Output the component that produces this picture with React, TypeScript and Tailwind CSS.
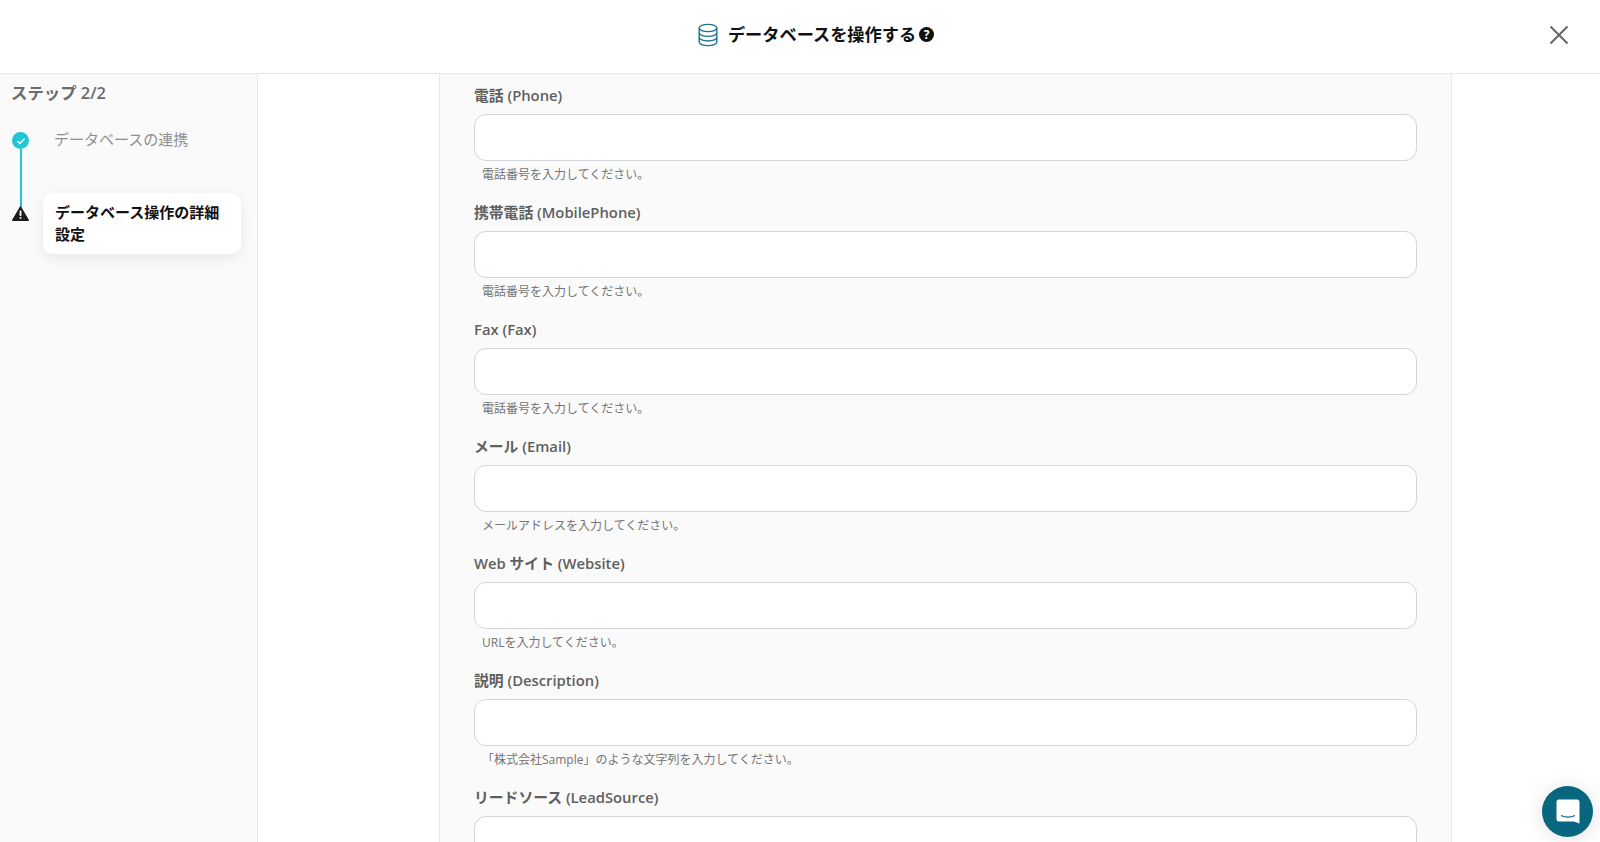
const font = { fontFamily: '"Open Sans", "Noto Sans CJK JP", sans-serif' };

const fields = [
  ['電話 (Phone)', '電話番号を入力してください。'],
  ['携帯電話 (MobilePhone)', '電話番号を入力してください。'],
  ['Fax (Fax)', '電話番号を入力してください。'],
  ['メール (Email)', 'メールアドレスを入力してください。'],
  ['Web サイト (Website)', 'URLを入力してください。'],
  ['説明 (Description)', '「株式会社Sample」のような文字列を入力してください。'],
  ['リードソース (LeadSource)', ''],
];

function Field({ label, help }: { label: string; help: string }) {
  return (
    <div className="h-[117px] shrink-0">
      <div className="h-[24px] mt-[1px] text-[14.8px] leading-[24px] font-semibold text-[#5f5f5f]">{label}</div>
      <input className="block w-full h-[47px] mt-[7px] rounded-[12px] border border-[#d3d5da] bg-white" />
      {help && <div className="mt-[5px] pl-[8px] text-[12px] leading-[18px] text-[#757575]">{help}</div>}
    </div>
  );
}

export default function App() {
  return (
    <div className="w-[1600px] h-[842px] overflow-hidden bg-white flex flex-col relative" style={font}>
      <header className="h-[74px] shrink-0 border-b border-[#e6e6e6] flex items-center justify-center relative">
        <div className="flex items-center mt-[-4px] ml-[32px]">
          <svg className="mt-[1px]" width="20" height="24" viewBox="0 0 20 24" fill="none" stroke="#1b7390" strokeWidth="1.4">
            <ellipse cx="10" cy="5" rx="8.8" ry="3.6" />
            <path d="M1.2 5v14c0 2 3.9 3.6 8.8 3.6s8.8-1.6 8.8-3.6V5" />
            <path d="M1.2 9.8c0 2 3.9 3.6 8.8 3.6s8.8-1.6 8.8-3.6" />
            <path d="M1.2 14.4c0 2 3.9 3.6 8.8 3.6s8.8-1.6 8.8-3.6" />
          </svg>
          <span className="ml-[10px] text-[17.2px] font-semibold text-[#111]">データベースを操作する</span>
          <span className="ml-[3px] w-[15px] h-[15px] rounded-full bg-[#111] text-white text-[12px] leading-[15px] font-bold text-center">?</span>
        </div>
        <svg className="absolute left-[1549px] top-[25px]" width="20" height="20" viewBox="0 0 20 20" stroke="#666" strokeWidth="2" fill="none">
          <path d="M1.5 1.5l17 17M18.5 1.5l-17 17" />
        </svg>
      </header>
      <div className="flex flex-1 min-h-0">
        <aside className="w-[258px] shrink-0 border-r border-[#e8e8e8] bg-[#fafafa] pt-[7px]">
          <div className="pl-[11px] h-[24px] text-[16.4px] leading-[24px] font-semibold text-[#6b6b6b]">ステップ 2/2</div>
          <div className="relative mt-[23px] h-[140px]">
            <div className="absolute left-[12px] top-[4px] w-[17px] h-[17px] rounded-full bg-[#20c6d8] flex items-center justify-center">
              <svg width="10" height="10" viewBox="0 0 10 10" fill="none" stroke="#fff" strokeWidth="1.4"><path d="M1.5 5.2l2.4 2.3 4.6-4.8" /></svg>
            </div>
            <div className="absolute left-[20px] top-[21px] w-[1.5px] h-[58px] bg-[#20c6d8]" />
            <svg className="absolute left-[12px] top-[78px]" width="17" height="15" viewBox="0 0 17 15">
              <path d="M8.5 0.5L16.7 14.5H0.3Z" fill="#1c1c1c" stroke="#1c1c1c" strokeLinejoin="round" />
              <rect x="7.6" y="4.5" width="1.8" height="5.5" rx=".5" fill="#fff" />
              <rect x="7.6" y="11" width="1.8" height="1.8" rx=".5" fill="#fff" />
            </svg>
            <div className="absolute left-[54px] top-[-1px] text-[15px] leading-[24px] text-[#8f8f8f]">データベースの連携</div>
            <div className="absolute left-[43px] top-[65px] w-[198px] h-[61px] rounded-[10px] bg-white shadow-[0_4px_14px_rgba(0,0,0,0.08)] pl-[12px] pt-[8px] text-[15px] leading-[22px] font-semibold text-[#111]">
              データベース操作の詳細<br />設定
            </div>
          </div>
        </aside>
        <div className="w-[181px] shrink-0" />
        <main className="w-[1013px] shrink-0 bg-[#fafafa] border-x border-[#e8e8e8] pl-[34px] pr-[34px] pt-[8px] flex flex-col overflow-hidden">
          {fields.map(([l, h]) => <Field key={l} label={l} help={h} />)}
        </main>
      </div>
      <button className="absolute left-[1542px] top-[786px] w-[51px] h-[51px] rounded-full bg-[#07677f] shadow-[0_2px_20px_rgba(0,0,0,0.12)] flex items-center justify-center">
        <svg width="24" height="25" viewBox="0 0 24 25">
          <path d="M3 0.5H21A2.5 2.5 0 0 1 23.5 3V24.5L18 22.5H3A2.5 2.5 0 0 1 .5 20V3A2.5 2.5 0 0 1 3 .5Z" fill="#fff" />
          <path d="M5 16.5c4 2.2 10 2.2 14 0" stroke="#07677f" strokeWidth="1.3" fill="none" />
        </svg>
      </button>
    </div>
  );
}
